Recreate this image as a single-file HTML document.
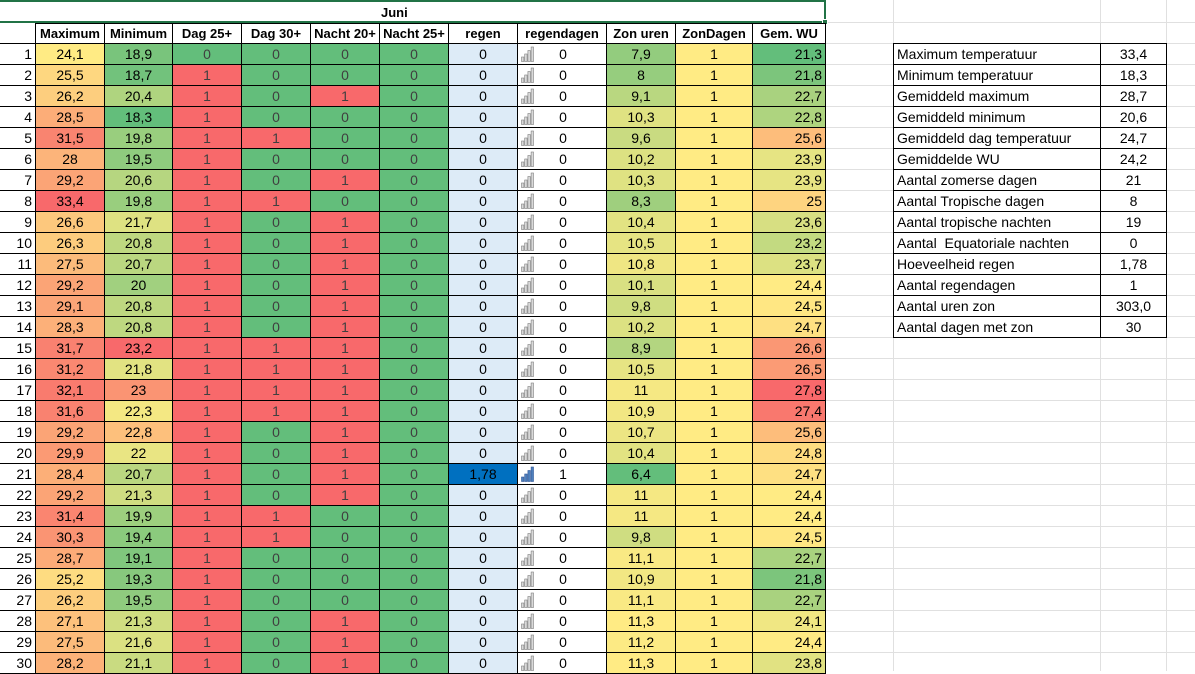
<!DOCTYPE html>
<html><head><meta charset="utf-8">
<style>
body{margin:0;width:1195px;height:671px;overflow:hidden;background:#fff;font-family:"Liberation Sans",Arial,sans-serif;font-size:14px;color:#000;position:relative}
.c{position:absolute;box-sizing:border-box;line-height:20px;text-align:center;white-space:nowrap;overflow:hidden}
.g{position:absolute;background:#e0e0e0}
</style></head><body>
<div id="root"></div>
<script>
var R=document.getElementById('root');
function d(x,y,w,h,st,t){var e=document.createElement('div');e.className='c';e.style.cssText='left:'+x+'px;top:'+y+'px;width:'+w+'px;height:'+h+'px;'+(st||'');if(t!==undefined)e.innerHTML=t;R.appendChild(e);return e;}
function gl(x,y,w,h){var e=document.createElement('div');e.className='g';e.style.cssText='left:'+x+'px;top:'+y+'px;width:'+w+'px;height:'+h+'px';R.appendChild(e);}
for(var y=22;y<=671;y+=21){gl(826,y,369,1);}
[893,1100,1166].forEach(function(x){gl(x,0,1,671);});
var cols=[0,35,104,172,241,310,379,448,517,606,675,752,825];
var hd=['','Maximum','Minimum','Dag 25+','Dag 30+','Nacht 20+','Nacht 25+','regen','regendagen','Zon uren','ZonDagen','Gem. WU'];
d(0,0,826,2,'background:#217346');
d(0,2,825,20,'font-weight:bold;font-size:13px;line-height:22px','<span style="position:absolute;left:381px">Juni</span>');
d(0,21,826,2,'background:#217346');
d(824,0,2,22,'background:#217346');
d(822,19,6,6,'background:#217346;border:1px solid #fff');
for(var i=1;i<12;i++){d(cols[i],23,cols[i+1]-cols[i]+1,21,'border:1px solid #000;font-weight:bold;font-size:13px;line-height:19px',hd[i]);}
var mx=[24.1,25.5,26.2,28.5,31.5,28,29.2,33.4,26.6,26.3,27.5,29.2,29.1,28.3,31.7,31.2,32.1,31.6,29.2,29.9,28.4,29.2,31.4,30.3,28.7,25.2,26.2,27.1,27.5,28.2];
var mn=[18.9,18.7,20.4,18.3,19.8,19.5,20.6,19.8,21.7,20.8,20.7,20,20.8,20.8,23.2,21.8,23,22.3,22.8,22,20.7,21.3,19.9,19.4,19.1,19.3,19.5,21.3,21.6,21.1];
var zon=[7.9,8,9.1,10.3,9.6,10.2,10.3,8.3,10.4,10.5,10.8,10.1,9.8,10.2,8.9,10.5,11,10.9,10.7,10.4,6.4,11,11,9.8,11.1,10.9,11.1,11.3,11.2,11.3];
var wu=[21.3,21.8,22.7,22.8,25.6,23.9,23.9,25,23.6,23.2,23.7,24.4,24.5,24.7,26.6,26.5,27.8,27.4,25.6,24.8,24.7,24.4,24.4,24.5,22.7,21.8,22.7,24.1,24.4,23.8];
var d30=[5,8,15,16,17,18,23,24],n20=[3,7,9,10,11,12,13,14,15,16,17,18,19,20,21,22,28,29,30];
var G=[99,190,123],Y=[255,235,132],Rd=[248,105,107];
function mix(a,b,t){t=Math.max(0,Math.min(1,t));return 'rgb('+a.map(function(v,k){return Math.round(v+(b[k]-v)*t)}).join(',')+')';}
function s3(v,lo,mid,hi){return v<=mid?mix(G,Y,(v-lo)/(mid-lo)):mix(Y,Rd,(v-mid)/(hi-mid));}
function f(v){return String(v).replace('.',',');}
var bars='<svg width="14" height="16" viewBox="0 0 14 16" style="position:absolute;left:3px;top:2px"><g fill="COL" stroke="SK" stroke-width="0.6"><rect x="0.5" y="11" width="2.4" height="4.5"/><rect x="3.7" y="8" width="2.4" height="7.5"/><rect x="6.9" y="4.5" width="2.4" height="11"/><rect x="10.1" y="1" width="2.4" height="14.5"/></g></svg>';
for(var r=0;r<30;r++){
 var y=43+r*21,n=r+1,B='border:1px solid #000;';
 d(0,y,36,22,B+'border-left:none;text-align:right;padding-right:3px',n);
 d(35,y,70,22,B+'background:'+mix(Y,Rd,(mx[r]-24.1)/(33.4-24.1)),f(mx[r]));
 d(104,y,69,22,B+'background:'+s3(mn[r],18.3,22.6,23.2),f(mn[r]));
 var a=n>1?1:0;
 d(172,y,70,22,B+'color:#404040;background:'+(a?'#f8696b':'#63be7b'),a);
 a=d30.indexOf(n)>=0?1:0;
 d(241,y,70,22,B+'color:#404040;background:'+(a?'#f8696b':'#63be7b'),a);
 a=n20.indexOf(n)>=0?1:0;
 d(310,y,70,22,B+'color:#404040;background:'+(a?'#f8696b':'#63be7b'),a);
 d(379,y,70,22,B+'color:#404040;background:#63be7b',0);
 var rain=n==21;
 d(448,y,70,22,B+'background:'+(rain?'#0070c0':'#ddebf7'),rain?'1,78':'0');
 d(517,y,90,22,B,'<span style="position:absolute;left:38px;width:14px;text-align:center">'+(rain?1:0)+'</span>'+bars.replace('COL',rain?'#4f81bd':'#d9d9d9').replace('SK',rain?'#2f5597':'#7f7f7f'));
 d(606,y,70,22,B+'background:'+mix(G,Y,(zon[r]-6.4)/(11.3-6.4)),f(zon[r]));
 d(675,y,78,22,B+'background:#ffeb84',1);
 d(752,y,74,22,B+'text-align:right;padding-right:3px;background:'+s3(wu[r],21.3,24.4,27.8),f(wu[r]));
}
var st=[['Maximum temperatuur','33,4'],['Minimum temperatuur','18,3'],['Gemiddeld maximum','28,7'],['Gemiddeld minimum','20,6'],['Gemiddeld dag temperatuur','24,7'],['Gemiddelde WU','24,2'],['Aantal zomerse dagen','21'],['Aantal Tropische dagen','8'],['Aantal tropische nachten','19'],['Aantal &nbsp;Equatoriale nachten','0'],['Hoeveelheid regen','1,78'],['Aantal regendagen','1'],['Aantal uren zon','303,0'],['Aantal dagen met zon','30']];
st.forEach(function(s,i){var y=43+i*21;
 d(893,y,208,22,'border:1px solid #000;background:#fff;text-align:left;padding-left:3px',s[0]);
 d(1100,y,67,22,'border:1px solid #000;background:#fff',s[1]);});
</script>
</body></html>
